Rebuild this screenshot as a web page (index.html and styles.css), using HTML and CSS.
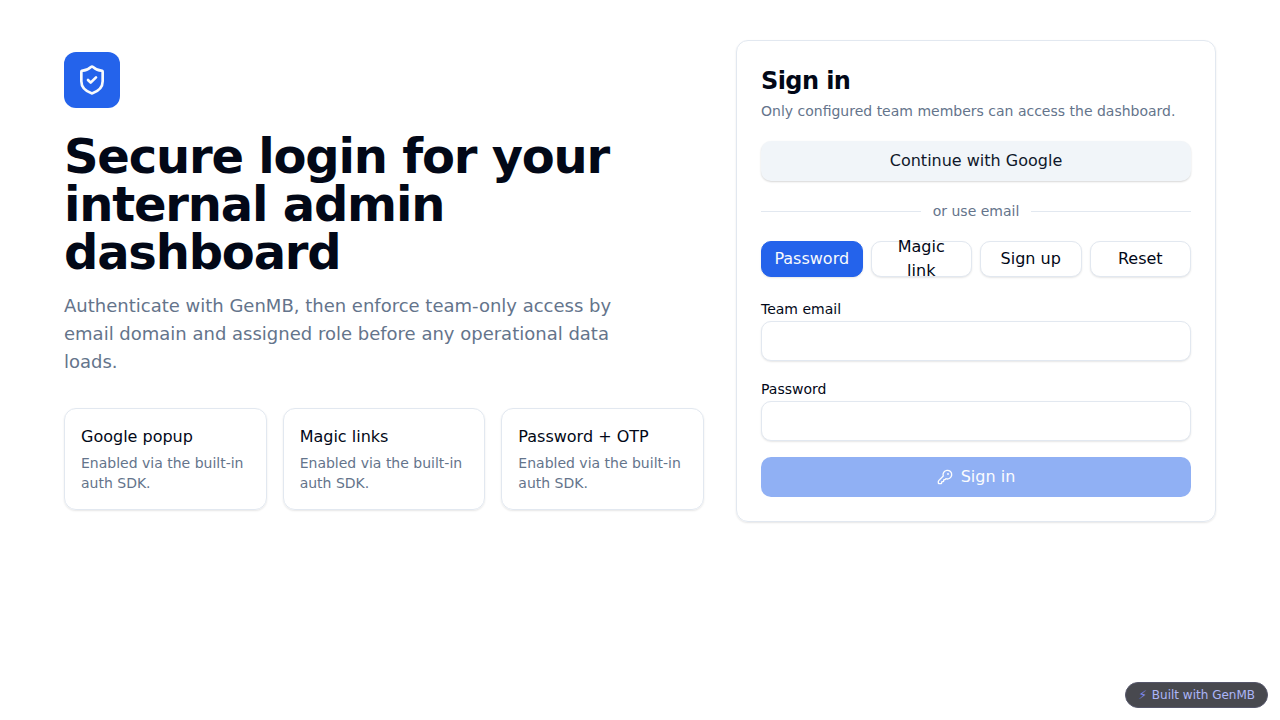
FILE: index.html
```html
<!DOCTYPE html>
<html lang="en">
<head>
<meta charset="utf-8">
<meta name="viewport" content="width=device-width, initial-scale=1">
<title>Sign in</title>
<link rel="stylesheet" href="styles.css">
</head>
<body>
<main class="layout">
  <section class="intro">
    <div class="logo">
      <svg class="logo-icon" viewBox="0 0 24 24" aria-hidden="true"><path d="M20 13c0 5-3.500 7.500-7.660 8.950a1 1 0 0 1-.67-.01C7.500 20.500 4 18 4 13V6a1 1 0 0 1 1-1c2 0 4.500-1.200 6.240-2.720a1.170 1.170 0 0 1 1.520 0C14.510 3.810 17 5 19 5a1 1 0 0 1 1 1z"/><path d="m9 12 2 2 4-4"/></svg>
    </div>
    <h1 class="headline">Secure login for your internal admin dashboard</h1>
    <p class="lead">Authenticate with GenMB, then enforce team-only access by email domain and assigned role before any operational data loads.</p>
    <div class="features">
      <article class="feature">
        <div class="feature-title">Google popup</div>
        <p class="feature-text">Enabled via the built-in auth SDK.</p>
      </article>
      <article class="feature">
        <div class="feature-title">Magic links</div>
        <p class="feature-text">Enabled via the built-in auth SDK.</p>
      </article>
      <article class="feature">
        <div class="feature-title">Password + OTP</div>
        <p class="feature-text">Enabled via the built-in auth SDK.</p>
      </article>
    </div>
  </section>
  <section class="card">
    <h2 class="card-title">Sign in</h2>
    <p class="card-text">Only configured team members can access the dashboard.</p>
    <button class="button button-google" type="button">Continue with Google</button>
    <div class="divider">or use email</div>
    <div class="tabs">
      <button class="tab tab-active" type="button">Password</button>
      <button class="tab" type="button">Magic link</button>
      <button class="tab" type="button">Sign up</button>
      <button class="tab" type="button">Reset</button>
    </div>
    <form class="form">
      <div class="field">
        <label class="label" for="email">Team email</label>
        <input class="input" id="email" type="email">
      </div>
      <div class="field">
        <label class="label" for="password">Password</label>
        <input class="input" id="password" type="password">
      </div>
      <button class="button button-submit" type="submit" disabled>
        <svg class="key-icon" viewBox="0 0 24 24" aria-hidden="true"><path d="M2.586 17.414A2 2 0 0 0 2 18.828V21a1 1 0 0 0 1 1h3a1 1 0 0 0 1-1v-1a1 1 0 0 1 1-1h1a1 1 0 0 0 1-1v-1a1 1 0 0 1 1-1h.172a2 2 0 0 0 1.414-.586l.814-.814a6.500 6.500 0 1 0-4-4z"/><circle class="key-hole" cx="16.500" cy="7.500" r=".5"/></svg>
        Sign in
      </button>
    </form>
  </section>
</main>
<a class="badge" href="#"><span class="bolt">⚡</span>Built with GenMB</a>
</body>
</html>
```
FILE: styles.css
```css
* {
  box-sizing: border-box;
}

body {
  margin: 0;
  background: #fff;
  color: #020817;
  font: 16px/24px "DejaVu Sans", sans-serif;
}

h1, h2, p {
  margin: 0;
}

button, input {
  font: inherit;
  color: inherit;
}

.layout {
  display: grid;
  grid-template-columns: minmax(0, 1fr) 480px;
  align-items: center;
  gap: 32px;
  max-width: 1200px;
  margin: 0 auto;
  padding: 40px 24px;
}

.logo {
  display: flex;
  align-items: center;
  justify-content: center;
  width: 56px;
  height: 56px;
  margin-bottom: 24px;
  border-radius: 12px;
  background: #2463eb;
  color: #f8fafc;
}

.logo-icon, .key-icon {
  fill: none;
  stroke: currentColor;
  stroke-width: 2;
  stroke-linecap: round;
  stroke-linejoin: round;
}

.logo-icon {
  width: 32px;
  height: 32px;
}

.headline {
  max-width: 576px;
  font-size: 48px;
  line-height: 48px;
  letter-spacing: -0.025em;
}

.lead {
  max-width: 576px;
  margin-top: 16px;
  color: #64748b;
  font-size: 18px;
  line-height: 28px;
}

.features {
  display: grid;
  grid-template-columns: repeat(3, 1fr);
  gap: 16px;
  margin-top: 32px;
}

.feature, .card {
  border: 1px solid #e2e8f0;
  border-radius: 12px;
  box-shadow: 0 1px 2px rgba(0, 0, 0, 0.1);
}

.feature {
  padding: 16px;
}

.feature-text, .card-text {
  margin-top: 4px;
  color: #64748b;
  font-size: 14px;
  line-height: 20px;
}

.card {
  padding: 24px;
}

.card-title {
  font-size: 24px;
  line-height: 32px;
  letter-spacing: -0.025em;
}

.button {
  display: flex;
  align-items: center;
  justify-content: center;
  gap: 8px;
  width: 100%;
  height: 40px;
  padding: 0 16px;
  border: 0;
  border-radius: 10px;
}

.button-google {
  margin-top: 20px;
  background: #f1f5f9;
  color: #0f172a;
  box-shadow: 0 1px 2px rgba(0, 0, 0, 0.16);
}

.divider {
  display: flex;
  align-items: center;
  gap: 12px;
  margin: 20px 0;
  color: #64748b;
  font-size: 14px;
  line-height: 20px;
}

.divider::before, .divider::after {
  content: "";
  flex: 1;
  height: 1px;
  background: #e2e8f0;
}

.tabs {
  display: grid;
  grid-template-columns: repeat(4, 1fr);
  gap: 8px;
}

.tab {
  display: flex;
  align-items: center;
  justify-content: center;
  height: 36px;
  padding: 0 12px;
  border: 1px solid #e2e8f0;
  border-radius: 10px;
  background: #fff;
  box-shadow: 0 1px 2px rgba(0, 0, 0, 0.1);
}

.tab-active {
  border-color: #2463eb;
  background: #2463eb;
  color: #f8fafc;
}

.form {
  display: grid;
  gap: 16px;
  margin-top: 20px;
}

.label {
  display: block;
  font-size: 14px;
}

.input {
  display: block;
  width: 100%;
  height: 40px;
  padding: 8px 12px;
  border: 1px solid #e2e8f0;
  border-radius: 10px;
  background: #fff;
  box-shadow: 0 1px 2px rgba(0, 0, 0, 0.1);
}

.button-submit {
  background: #2463eb;
  color: #f8fafc;
  opacity: 0.5;
}

.key-icon {
  width: 16px;
  height: 16px;
}

.key-hole {
  fill: currentColor;
}

.badge {
  position: fixed;
  right: 12px;
  bottom: 12px;
  display: flex;
  gap: 5px;
  padding: 5px 12px;
  border: 1px solid #55566a;
  border-radius: 13px;
  background: #48494f;
  color: #acb6f8;
  font-size: 12px;
  line-height: 14px;
  text-decoration: none;
}

.bolt {
  color: #818cf8;
}

@media (max-width: 1023px) {
  .layout {
    grid-template-columns: minmax(0, 1fr);
  }
}
```
